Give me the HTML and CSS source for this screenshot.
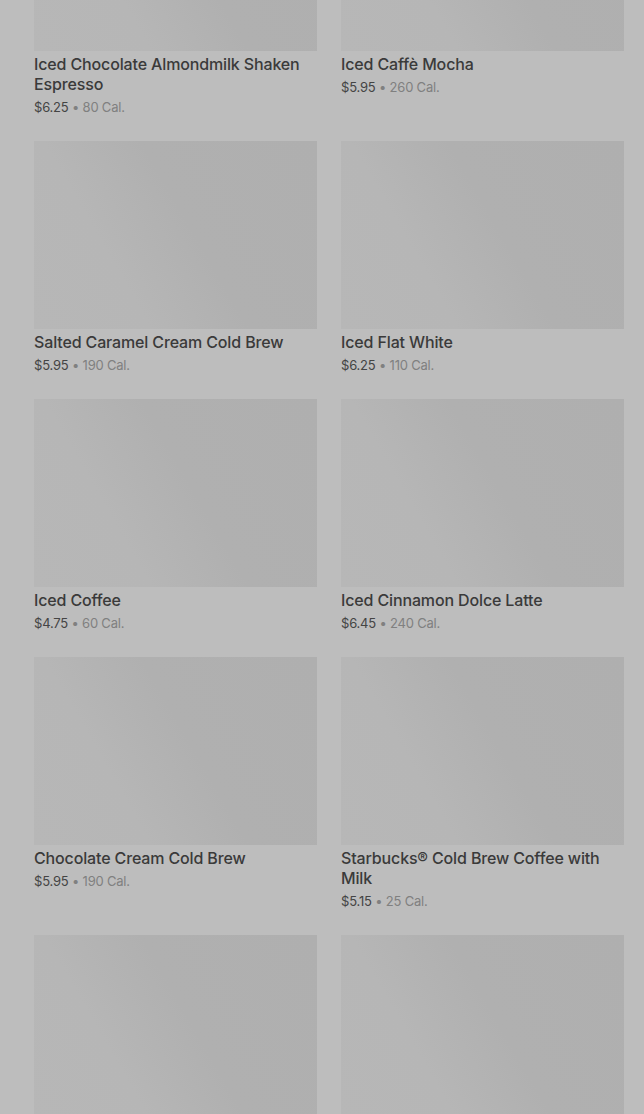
FILE: index.html
```html
<!DOCTYPE html>
<html lang="en">
<head>
    <meta charset="UTF-8">
    <meta name="viewport" content="width=device-width, initial-scale=1.0">
    <title>Cold Coffees</title>
    <link rel="stylesheet" href="styles.css">
</head>
<body>
    <div class="grid">
        <div class="card">
            <div class="thumb"></div>
            <h3 class="name">Iced Chocolate Almondmilk Shaken Espresso</h3>
            <p class="meta"><span class="price">$6.25</span> • 80 Cal.</p>
        </div>
        <div class="card">
            <div class="thumb"></div>
            <h3 class="name">Iced Caffè Mocha</h3>
            <p class="meta"><span class="price">$5.95</span> • 260 Cal.</p>
        </div>

        <div class="card">
            <div class="thumb"></div>
            <h3 class="name">Salted Caramel Cream Cold Brew</h3>
            <p class="meta"><span class="price">$5.95</span> • 190 Cal.</p>
        </div>
        <div class="card">
            <div class="thumb"></div>
            <h3 class="name">Iced Flat White</h3>
            <p class="meta"><span class="price">$6.25</span> • 110 Cal.</p>
        </div>

        <div class="card">
            <div class="thumb"></div>
            <h3 class="name">Iced Coffee</h3>
            <p class="meta"><span class="price">$4.75</span> • 60 Cal.</p>
        </div>
        <div class="card">
            <div class="thumb"></div>
            <h3 class="name">Iced Cinnamon Dolce Latte</h3>
            <p class="meta"><span class="price">$6.45</span> • 240 Cal.</p>
        </div>

        <div class="card">
            <div class="thumb"></div>
            <h3 class="name">Chocolate Cream Cold Brew</h3>
            <p class="meta"><span class="price">$5.95</span> • 190 Cal.</p>
        </div>
        <div class="card">
            <div class="thumb"></div>
            <h3 class="name">Starbucks® Cold Brew Coffee with Milk</h3>
            <p class="meta"><span class="price">$5.15</span> • 25 Cal.</p>
        </div>

        <div class="card">
            <div class="thumb"></div>
        </div>
        <div class="card">
            <div class="thumb"></div>
        </div>
    </div>
</body>
</html>
```

FILE: styles.css
```css
html, body {
    height: 100%;
    overflow: hidden;
}
body {
    margin: 0;
    background-color: #bdbdbd;
    font-family: Inter, "Noto Sans", sans-serif;
    color: #3a3a3a;
}
.grid {
    display: grid;
    grid-template-columns: 283px 283px;
    column-gap: 24px;
    row-gap: 24px;
    padding-left: 34px;
    margin-top: -137px;
}
.thumb {
    height: 188px;
    background: linear-gradient(60deg, #b7b7b7 0%, #b6b6b6 30%, #b0b0b0 55%, #afafaf 100%);
}
.name {
    margin: 3px 0 0;
    font-size: 16px;
    font-weight: 500;
    line-height: 20px;
    letter-spacing: -0.14px;
    color: #3a3a3a;
}
.meta {
    margin: 3px 0 0;
    font-size: 13px;
    line-height: 20px;
    letter-spacing: -0.2px;
    color: #808080;
}
.price {
    color: #444;
}
```
